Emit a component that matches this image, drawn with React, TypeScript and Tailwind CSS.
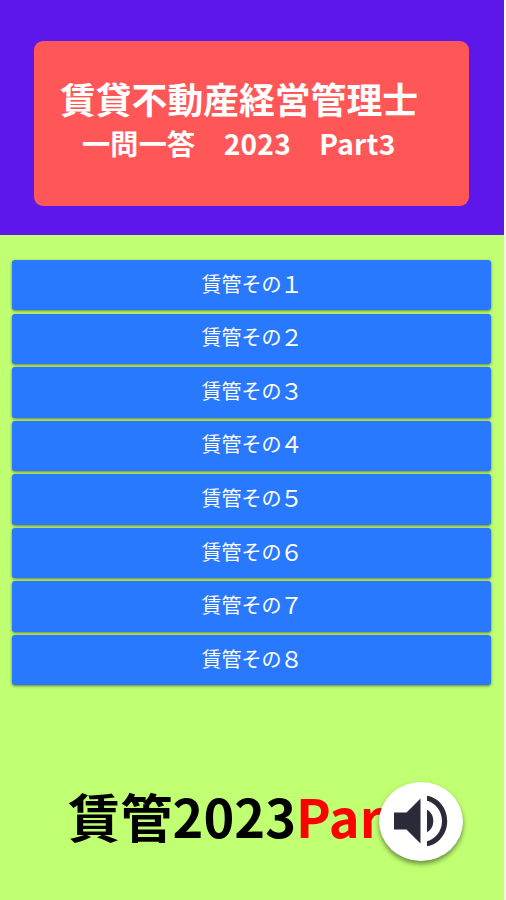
const quizzes = [
  { id: 1, number: "１" },
  { id: 2, number: "２" },
  { id: 3, number: "３" },
  { id: 4, number: "４" },
  { id: 5, number: "５" },
  { id: 6, number: "６" },
  { id: 7, number: "７" },
  { id: 8, number: "８" },
];

function SpeakerIcon() {
  return (
    <svg viewBox="0 0 54 54" className="h-[54px] w-[54px]" fill="#2b2a38">
      <path d="M0 18.500h12.500L26.500 4.500v45L12.500 35.500H0z" />
      <path d="M33 15.800c4 2 6.300 6.300 6.300 11.200s-2.300 9.200-6.300 11.200z" />
      <path d="M33 1.700C44.500 3.500 53.200 14 53.200 27s-8.700 23.500-20.200 25.300v-5C41.500 45 48 37 48 27S41.500 9 33 6.700z" />
    </svg>
  );
}

export default function App() {
  return (
    <div className="h-[900px] w-[506px] overflow-hidden bg-[#f4fbe8] font-['Noto_Sans_CJK_JP',sans-serif]">
      <div className="flex h-full w-[504px] flex-col bg-[#c1ff72]">
        <header className="h-[235px] bg-[#5e17eb] pt-[41px] pl-[34px]">
          <div className="h-[165px] w-[435px] rounded-[9px] bg-[#ff5757] pt-[35px] font-bold whitespace-nowrap text-white">
            <h1 className="pl-[26px] text-[35.8px] leading-[44px]">賃貸不動産経営管理士</h1>
            <p className="pl-[48px] text-[28.1px] leading-[45px] tracking-[0.25px]">
              一問一答　2023　Part3
            </p>
          </div>
        </header>

        <nav className="mt-[25px] flex flex-col gap-[3.200px] px-3">
          {quizzes.map((quiz) => (
            <button
              key={quiz.id}
              className="h-[50.400px] w-[479px] rounded-[3px] bg-[#2979ff] pb-[3px] text-center text-[20px] leading-[30px] text-white shadow-[0_1px_3px_rgba(0,0,0,0.5)]"
            >
              賃管その
              <span className="-mx-[1.500px] align-[-1px] text-[23px] leading-none">{quiz.number}</span>
            </button>
          ))}
        </nav>

        <footer className="relative mt-[97px] h-[80px] pl-[68px]">
          <p className="-mt-[2px] text-[52.300px] leading-[70px] font-bold whitespace-nowrap text-black">
            賃管2023<span className="text-[#ff0000]">Part3</span>
          </p>
          {/* Covers the right part of the title, up to the page edge */}
          <div className="absolute top-0 left-[421px] h-[80px] w-[83px] bg-[#c1ff72]" />
          <button
            aria-label="音声"
            className="absolute top-0 left-[379px] flex h-[79px] w-[84px] items-center justify-center rounded-[50%] bg-white pb-[2px] shadow-[0_3px_5px_rgba(0,0,0,0.45)]"
          >
            <SpeakerIcon />
          </button>
        </footer>
      </div>
    </div>
  );
}
